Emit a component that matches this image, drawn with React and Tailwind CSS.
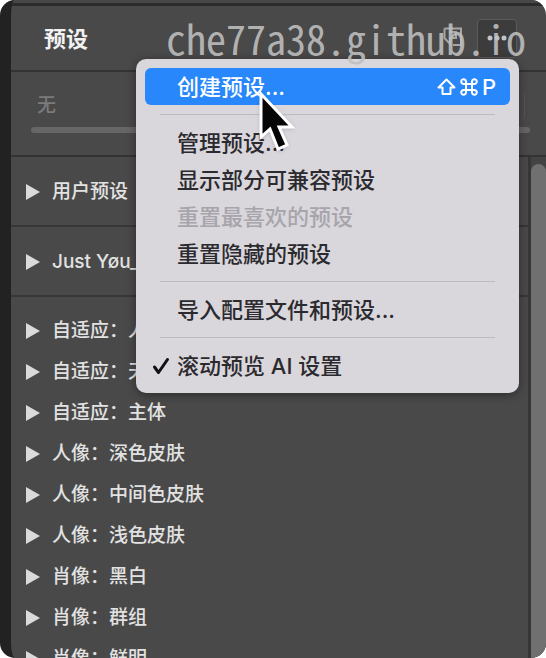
import React from "react";

const groups = [
  "自适应：人物",
  "自适应：天空",
  "自适应：主体",
  "人像：深色皮肤",
  "人像：中间色皮肤",
  "人像：浅色皮肤",
  "肖像：黑白",
  "肖像：群组",
  "肖像：鲜明",
];

function Triangle() {
  return (
    <svg className="h-4 w-[14px] shrink-0 fill-[#dadada]" viewBox="0 0 14 16" aria-hidden="true">
      <path d="M0 0 14 8 0 16Z" />
    </svg>
  );
}

function PresetRow({ label, className }) {
  return (
    <button
      type="button"
      className={`flex w-full shrink-0 items-center gap-3 whitespace-nowrap pl-[15px] pt-0.5 text-left text-[19px] font-medium leading-6 text-[#e2e2e2] ${className}`}
    >
      <Triangle />
      {label}
    </button>
  );
}

function ShiftIcon() {
  return (
    <svg className="h-[18px] w-[19px]" viewBox="0 0 19 18" fill="none" stroke="currentColor" strokeWidth="2" strokeLinejoin="round" aria-hidden="true">
      <path d="M9.5 1.5 17.5 9.500H13.500V16H5.500V9.500H1.500Z" />
    </svg>
  );
}

function CommandIcon() {
  return (
    <svg className="h-[18px] w-[18px]" viewBox="0 0 18 18" fill="none" stroke="currentColor" strokeWidth="2" aria-hidden="true">
      <path d="M6 6V3.700A2.400 2.400 0 1 0 3.700 6H14.300A2.400 2.400 0 1 0 12 3.700V14.300A2.400 2.400 0 1 0 14.300 12H3.700A2.400 2.400 0 1 0 6 14.300Z" />
    </svg>
  );
}

function MenuItem({ children, active, disabled, checked, shortcut }) {
  return (
    <button
      type="button"
      role={checked ? "menuitemcheckbox" : "menuitem"}
      aria-checked={checked}
      disabled={disabled}
      className={`flex h-[37px] w-full items-center whitespace-nowrap rounded-md pr-[14px] text-left text-[22px] font-medium leading-7 ${
        active ? "bg-[#2787fb] text-white" : disabled ? "text-[#a7a5ab]" : "text-[#2b2a2e]"
      }`}
    >
      <span className="flex w-8 shrink-0 justify-center">
        {checked && (
          <svg className="h-[18px] w-[18px]" viewBox="0 0 18 18" fill="none" stroke="#111" strokeWidth="3" strokeLinecap="round" strokeLinejoin="round" aria-hidden="true">
            <path d="M2.500 10 6.500 15.500 15.500 2.500" />
          </svg>
        )}
      </span>
      <span className="flex-1">{children}</span>
      {shortcut}
    </button>
  );
}

function Separator() {
  return (
    <div role="separator" className="px-[15px] py-[9px]">
      <div className="h-px bg-[#bdbbc0]" />
    </div>
  );
}

function PresetMenu() {
  return (
    <div
      role="menu"
      className="absolute right-[27px] top-[59px] w-[383px] rounded-[10px] bg-[#d9d6dc] px-[9px] pb-[9px] pt-[9px] shadow-[0_2px_10px_rgba(0,0,0,0.4)]"
    >
      <MenuItem
        active
        shortcut={
          <span className="flex items-center gap-1">
            <ShiftIcon />
            <CommandIcon />
            <span>P</span>
          </span>
        }
      >
        创建预设...
      </MenuItem>
      <Separator />
      <MenuItem>管理预设...</MenuItem>
      <MenuItem>显示部分可兼容预设</MenuItem>
      <MenuItem disabled>重置最喜欢的预设</MenuItem>
      <MenuItem>重置隐藏的预设</MenuItem>
      <Separator />
      <MenuItem>导入配置文件和预设...</MenuItem>
      <Separator />
      <MenuItem checked>滚动预览 AI 设置</MenuItem>
      <svg className="absolute left-[122px] top-[31px] h-[62px] w-[40px] drop-shadow" viewBox="0 0 40 62" aria-hidden="true">
        <path d="M3 4V47L12 39 20 59 29 55 21 37H34Z" fill="#050505" stroke="#fff" strokeWidth="3" strokeLinejoin="miter" />
      </svg>
    </div>
  );
}

export default function App() {
  return (
    <div className="h-screen bg-white font-['Inter','Noto_Sans_CJK_SC',sans-serif]">
      <main className="relative flex h-full flex-col overflow-hidden rounded-[15px] border-l-[11px] border-[#222222] bg-[#494949]">
        <div className="h-[3px] shrink-0 bg-[#474747]" />
        <div className="h-[3px] shrink-0 bg-[#2c2c2c]" />

        <header className="flex h-[66px] shrink-0 items-center border-b-2 border-[#333333] pl-[33px] pr-[29px]">
          <h1 className="flex-1 pt-0.5 text-[22px] font-bold leading-8 text-[#f2f2f2]">预设</h1>
          <button type="button" aria-label="预设收藏" className="mr-[14px] text-[#a5a5a5]">
            <svg className="h-[22px] w-5" viewBox="0 0 20 22" fill="none" stroke="currentColor" strokeWidth="2" aria-hidden="true">
              <path d="M1.500 1.500H18V18H10M1.500 1.500V11L7 17V11H13V5H6" />
            </svg>
          </button>
          <button
            type="button"
            aria-label="更多选项"
            className="flex h-[39px] w-10 items-center justify-center rounded border border-[#5b5b5b] bg-[#3c3c3c]"
          >
            <svg className="h-[6px] w-5 fill-[#c4c4c4]" viewBox="0 0 20 6" aria-hidden="true">
              <circle cx="3" cy="3" r="2.500" />
              <circle cx="10" cy="3" r="2.500" />
              <circle cx="17" cy="3" r="2.500" />
            </svg>
          </button>
        </header>

        <section className="flex h-[85px] shrink-0 flex-col gap-[7px] border-b-2 border-[#333333] pl-5 pr-4 pt-[19px]">
          <select
            aria-label="预设"
            disabled
            className="mr-[5px] h-[29px] appearance-none rounded border-r border-[#565656] pl-1.5 text-[19px] font-medium leading-6 text-[#7b7b7b] opacity-100"
          >
            <option>无</option>
          </select>
          <input
            type="range"
            aria-label="数量"
            disabled
            className="h-[6px] w-full shrink-0 appearance-none rounded-full bg-[#666666] [&::-webkit-slider-thumb]:h-0 [&::-webkit-slider-thumb]:w-0 [&::-webkit-slider-thumb]:appearance-none"
          />
        </section>

        <div className="flex min-h-0 flex-1">
          <div className="flex min-w-0 flex-1 flex-col overflow-hidden">
            <PresetRow label="用户预设" className="h-[70px] border-b-2 border-[#373737]" />
            <PresetRow label="Just Yøu_Presets" className="h-[70px] border-b-2 border-[#373737]" />
            <div className="pt-3">
              {groups.map((g) => (
                <PresetRow key={g} label={g} className="h-[41px]" />
              ))}
            </div>
          </div>
          <div className="w-[18px] shrink-0 border-l-[3px] border-[#363636] bg-[#434343] pt-[7px]">
            <div className="h-full rounded-t-lg bg-[#707070]" />
          </div>
        </div>

        <PresetMenu />

        <p className="pointer-events-none absolute right-5 top-[18px] whitespace-nowrap font-['Noto_Sans_Mono_CJK_SC','Liberation_Mono',monospace] text-[40px] font-light leading-[40px] text-[#c0c0c0]/90">
          che77a38.github.io
        </p>
      </main>
    </div>
  );
}
